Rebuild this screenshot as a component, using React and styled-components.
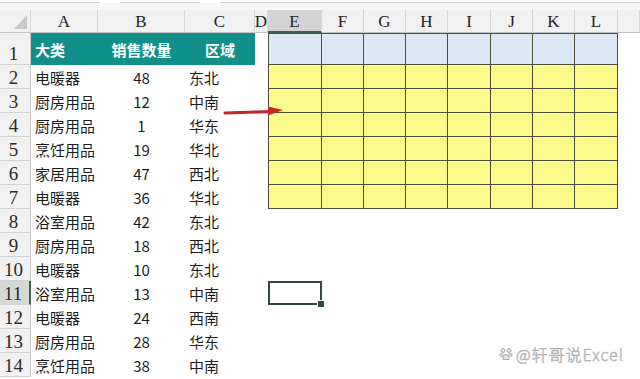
import React from "react";
import styled, { createGlobalStyle } from "styled-components";

const GlobalStyle = createGlobalStyle`
  * { box-sizing: border-box; }
  body {
    margin: 0;
    background: #fff;
    font-family: "Noto Sans CJK SC", "Noto Sans", sans-serif;
    overflow: hidden;
  }
`;

const COLS = ["A", "B", "C", "D", "E", "F", "G", "H", "I", "J", "K", "L"];
const COL_WIDTHS = "31px 67px 87px 70px 13px 54px 42px 42px 42px 43px 42px 42px 43px 1fr";

const rows = [
  ["电暖器", 48, "东北"],
  ["厨房用品", 12, "中南"],
  ["厨房用品", 1, "华东"],
  ["烹饪用品", 19, "华北"],
  ["家居用品", 47, "西北"],
  ["电暖器", 36, "华北"],
  ["浴室用品", 42, "东北"],
  ["厨房用品", 18, "西北"],
  ["电暖器", 10, "东北"],
  ["浴室用品", 13, "中南"],
  ["电暖器", 24, "西南"],
  ["厨房用品", 28, "华东"],
  ["烹饪用品", 38, "中南"],
];

const Page = styled.div`
  position: relative;
  width: 640px;
  height: 379px;
  overflow: hidden;
`;

const TopBar = styled.div`
  display: flex;
  gap: 20px;
  height: 10px;
  background: #f7f7f7;
  border-top: 3px solid #fff;
`;

const BarBox = styled.div`
  width: ${p => p.w}px;
  flex: ${p => (p.grow ? 1 : "none")};
  height: 0;
  border-bottom: 1px solid #cfcfcf;
  margin-top: -1px;
`;

const Sheet = styled.div`
  display: grid;
  grid-template-columns: ${COL_WIDTHS};
  grid-template-rows: 23px 32px repeat(13, 24px);
`;

const Corner = styled.div`
  background: #f1f1f1;
  border-right: 1px solid #d6d6d6;
  border-bottom: 1px solid #c4c4c4;
  position: relative;
  &::after {
    content: "";
    position: absolute;
    right: 3px;
    bottom: 3px;
    border-style: solid;
    border-width: 0 0 14px 13px;
    border-color: transparent transparent #c9c9c9 transparent;
  }
`;

const ColHead = styled.div`
  display: flex;
  align-items: center;
  justify-content: center;
  font-family: "Liberation Serif", serif;
  font-size: 17px;
  color: #222;
  background: ${p => (p.active ? "#d3d3d3" : "#f1f1f1")};
  border-right: 1px solid #d6d6d6;
  border-bottom: ${p => (p.active ? "2px solid #3f5f4f" : "1px solid #c4c4c4")};
  padding-top: 2px;
`;

const RowHead = styled.div`
  display: flex;
  align-items: flex-end;
  justify-content: center;
  padding: 0 3px 1px 0;
  font-family: "Liberation Serif", serif;
  font-size: 19px;
  line-height: 1;
  color: #2a2a2a;
  background: ${p => (p.active ? "#d5d9d6" : "#f1f1f1")};
  border-right: ${p => (p.active ? "2px solid #3f5f4f" : "1px solid #c8c8c8")};
  border-bottom: 1px solid #d2d2d2;
`;

const Cell = styled.div`
  position: relative;
  display: flex;
  align-items: center;
  justify-content: ${p => p.align || "flex-start"};
  padding: ${p => (p.align === "center" ? "0" : "0 0 0 4px")};
  font-size: 15px;
  font-weight: ${p => (p.bold ? 700 : 400)};
  color: ${p => (p.bold ? "#fff" : "#1c1c1c")};
  white-space: nowrap;
  background: ${p => p.fill || "transparent"};
  border-right: ${p => (p.grid ? "1px solid #4e4e3c" : "none")};
  border-bottom: ${p => (p.grid ? "1px solid #4e4e3c" : "none")};
  border-left: ${p => (p.first ? "1px solid #4e4e3c" : "none")};
  border-top: ${p => (p.top ? "1px solid #4e4e3c" : "none")};
  box-shadow: ${p => (p.selected ? "inset 0 0 0 2px #2c4b3e" : "none")};
  &::after {
    content: "";
    display: ${p => (p.selected ? "block" : "none")};
    position: absolute;
    right: -3px;
    bottom: -3px;
    width: 6px;
    height: 6px;
    background: #2c4b3e;
    border: 1px solid #fff;
  }
`;

const Arrow = styled.svg`
  position: absolute;
  left: 222px;
  top: 102px;
`;

const Watermark = styled.div`
  position: absolute;
  left: 499px;
  top: 342px;
  display: flex;
  align-items: center;
  gap: 3px;
  font-family: "Noto Sans CJK SC", "DejaVu Sans", sans-serif;
  font-size: 16px;
  font-weight: 300;
  color: #e4e4e4;
  -webkit-text-stroke: 0.5px #a8a8a8;
  letter-spacing: 1px;
`;

const TEAL = "#11908b";
const BLUE = "#dce8f5";
const YELLOW = "#fdfa8c";

function dataCell(r, c) {
  // r: 1-based sheet row, c: 0-based column index into COLS
  const col = COLS[c];
  const inBox = c >= 4 && r <= 7;
  const props = {
    key: col + r,
    grid: inBox,
    first: inBox && c === 4,
    top: inBox && r === 1,
    fill: inBox ? (r === 1 ? BLUE : YELLOW) : undefined,
    selected: col === "E" && r === 11,
  };
  if (r === 1 && c < 3) {
    const text = ["大类", "销售数量", "区域"][c];
    return (
      <Cell {...props} fill={TEAL} bold align={c === 0 ? undefined : "center"}>
        {text}
      </Cell>
    );
  }
  if (r > 1 && c < 3) {
    const v = rows[r - 2][c];
    return (
      <Cell {...props} align={c === 1 ? "center" : undefined}>
        {v}
      </Cell>
    );
  }
  return <Cell {...props} />;
}

function Logo() {
  return (
    <svg width="14" height="14" viewBox="0 0 14 14">
      <g fill="#e4e4e4" stroke="#aaa" strokeWidth="1">
        <circle cx="4" cy="3.5" r="2" />
        <circle cx="10" cy="3.5" r="2" />
        <circle cx="2.5" cy="8" r="1.6" />
        <circle cx="11.5" cy="8" r="1.6" />
        <path d="M4 12.5 C4 9 5.5 7.5 7 7.5 C8.5 7.5 10 9 10 12.5 Z" />
      </g>
    </svg>
  );
}

export default function App() {
  const sheetRows = [];
  for (let r = 1; r <= 14; r++) {
    sheetRows.push(
      <RowHead key={"h" + r} active={r === 11}>
        {r}
      </RowHead>
    );
    for (let c = 0; c < COLS.length; c++) sheetRows.push(dataCell(r, c));
    sheetRows.push(<Cell key={"x" + r} />);
  }

  return (
    <Page>
      <GlobalStyle />
      <TopBar>
        <BarBox w={100} />
        <BarBox w={80} />
        <BarBox grow />
      </TopBar>
      <Sheet>
        <Corner />
        {COLS.map(c => (
          <ColHead key={c} active={c === "E"}>
            {c}
          </ColHead>
        ))}
        <ColHead />
        {sheetRows}
      </Sheet>
      <Arrow width="64" height="16" viewBox="0 0 64 16">
        <line x1="3" y1="11" x2="49" y2="9.5" stroke="#c0262b" strokeWidth="3.2" strokeLinecap="round" />
        <polygon points="46,4.5 61,8 46,13.5" fill="#d0262a" />
      </Arrow>
      <Watermark>
        <Logo />
        <span>@轩哥说Excel</span>
      </Watermark>
    </Page>
  );
}
